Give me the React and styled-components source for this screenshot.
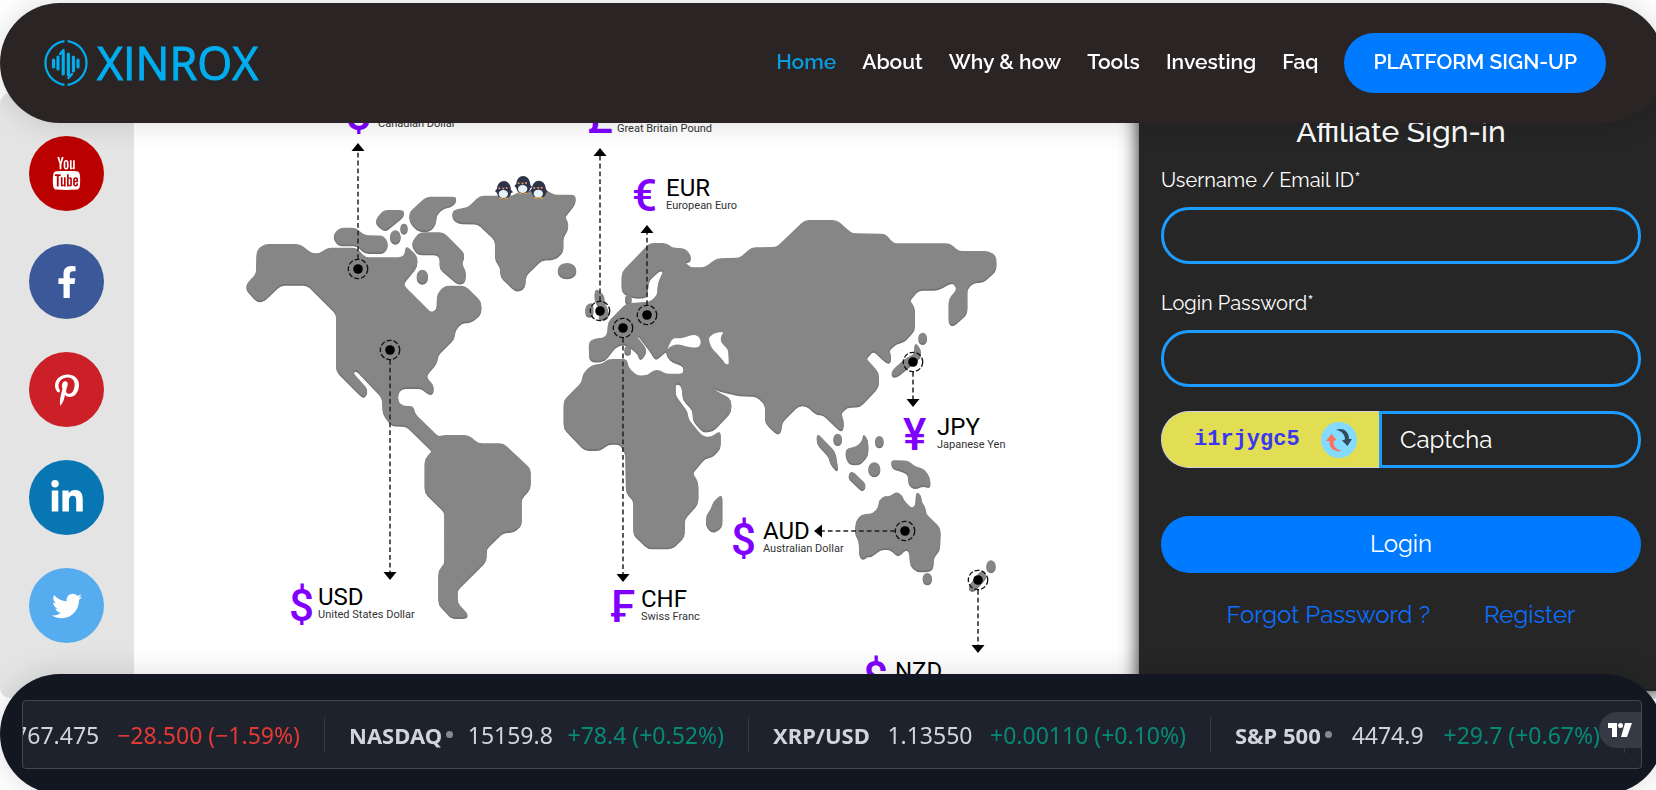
import React from "react";
import styled, { createGlobalStyle } from "styled-components";
import { FaFacebookF, FaPinterestP, FaLinkedinIn, FaTwitter } from "react-icons/fa";
import { TfiYoutube } from "react-icons/tfi";

const GlobalStyle = createGlobalStyle`
  * { box-sizing: border-box; }
  body {
    margin: 0;
    background: #fff;
    overflow: hidden;
    font-family: Raleway, "Open Sans", "Noto Sans", sans-serif;
  }
`;

const Page = styled.div`
  overflow: hidden;
`;

/* ---------- header ---------- */

const Header = styled.header`
  position: fixed;
  z-index: 10;
  top: 3px;
  left: 0;
  right: -8px;
  height: 120px;
  padding: 0 58px 0 43px;
  border-radius: 60px;
  background: #2a2424;
  box-shadow: 0 0 30px rgba(0, 0, 0, 0.14);
  display: flex;
  align-items: center;
  justify-content: space-between;
`;

const Brand = styled.a`
  display: flex;
  align-items: center;
  gap: 6px;
  color: #00adef;
  font: 400 45px/60px "Open Sans", "Noto Sans", sans-serif;
  -webkit-text-stroke: 1px #00adef;
  text-decoration: none;
`;

const Nav = styled.nav`
  display: flex;
  align-items: center;
  gap: 26px;
`;

const NavLink = styled.a`
  padding: 15px 0 17px;
  color: ${(p) => (p.$active ? "#0a9bdc" : "#fff")};
  font-size: 21px;
  font-weight: 600;
  line-height: 28px;
  text-decoration: none;
  white-space: nowrap;
`;

const SignUp = styled(NavLink)`
  padding: 15px 29px 17px;
  border-radius: 30px;
  background: #007bff;
`;

/* ---------- main ---------- */

const Main = styled.main`
  display: flex;
  align-items: flex-start;
  margin-right: -8px;
  padding-top: 93px;
`;

const Social = styled.aside`
  flex: 0 0 134px;
  display: flex;
  flex-direction: column;
  align-items: center;
  gap: 33px;
  padding: 43px 1px 55px 0;
  border-radius: 10px 0 0 10px;
  background: #e4e4e4;
`;

const SocialLink = styled.a`
  display: flex;
  align-items: center;
  justify-content: center;
  width: 75px;
  height: 75px;
  border-radius: 50%;
  background: ${(p) => p.$color};
  color: #fff;
`;

const MapArea = styled.section`
  flex: 1;
  min-width: 0;
  background: #fff;
  svg {
    display: block;
    width: 100%;
    height: auto;
  }
`;

const Panel = styled.section`
  position: relative;
  flex: 0 0 525px;
  padding: 17px 23px 58px 22px;
  background: #262626;
  box-shadow: 0 0 18px rgba(0, 0, 0, 0.9);
  color: #fff;
`;

const Title = styled.h1`
  margin: 0;
  font-size: 30px;
  font-weight: 500;
  line-height: 44px;
  text-align: center;
`;

const Form = styled.form`
  display: flex;
  flex-direction: column;
  padding-top: 11px;
`;

const Field = styled.label`
  display: flex;
  flex-direction: column;
  gap: 12px;
  margin-bottom: 24px;
  font-size: 20px;
  line-height: 30px;
`;

const TextInput = styled.input`
  width: 100%;
  height: 57px;
  padding: 0 24px;
  border: 3px solid #1c9cff;
  border-radius: 28px;
  outline: 0;
  background: transparent;
  color: #fff;
  font: inherit;
`;

const CaptchaRow = styled.div`
  display: flex;
  height: 57px;
`;

const CaptchaImage = styled.div`
  flex: 0 0 218px;
  display: flex;
  align-items: center;
  justify-content: space-between;
  padding: 0 22px 0 32px;
  border: 1px solid #ced4da;
  border-right: 0;
  border-radius: 28px 0 0 28px;
  background: #e1de53;
  color: #3a36f2;
  font: 700 22px/30px "Liberation Mono", monospace;
`;

const Refresh = styled.button`
  width: 36px;
  height: 36px;
  padding: 0;
  border: 0;
  border-radius: 50%;
  background: #84dbff;
  svg { display: block; }
`;

const CaptchaInput = styled(TextInput)`
  flex: 1;
  padding: 0 18px;
  border-radius: 0 28px 28px 0;
  font-size: 24px;
  &::placeholder {
    color: #fff;
    opacity: 1;
  }
`;

const LoginButton = styled.button`
  height: 57px;
  margin-top: 48px;
  padding: 0 0 3px;
  border: 0;
  border-radius: 28px;
  background: #007bff;
  color: #fff;
  font: inherit;
  font-size: 24px;
`;

const Links = styled.div`
  display: flex;
  justify-content: center;
  gap: 54px;
  padding-top: 24px;
  a {
    color: #0d6efd;
    font-size: 24px;
    line-height: 36px;
    text-decoration: none;
  }
`;

/* ---------- ticker ---------- */

const TickerBar = styled.footer`
  position: fixed;
  z-index: 10;
  left: 0;
  right: -8px;
  bottom: -4px;
  height: 120px;
  padding: 26px 22px 25px;
  border-radius: 60px;
  background: #131722;
  box-shadow: 0 0 30px rgba(0, 0, 0, 0.14);
`;

const Ticker = styled.div`
  position: relative;
  display: flex;
  align-items: center;
  height: 69px;
  overflow: hidden;
  border: 1px solid #434651;
  border-radius: 4px;
  background: #1e222d;
  font: 400 23px/36px "Noto Sans", "Open Sans", sans-serif;
  color: #d1d4dc;
`;

const Quote = styled.div`
  flex: 0 0 ${(p) => p.$width}px;
  min-width: 0;
  display: flex;
  align-items: center;
  justify-content: ${(p) => (p.$clipped ? "flex-end" : "space-between")};
  gap: ${(p) => (p.$clipped ? 18 : 12)}px;
  height: 36px;
  padding: 0 24px 0 ${(p) => (p.$clipped ? 0 : 24)}px;
  border-right: 1px solid #363a45;
  overflow: hidden;
  white-space: nowrap;
`;

const Symbol = styled.a`
  display: flex;
  align-items: center;
  gap: 4px;
  color: inherit;
  font-size: 22px;
  font-weight: 700;
  text-decoration: none;
`;

const Dot = styled.span`
  width: 7px;
  height: 7px;
  border-radius: 50%;
  background: #868993;
`;

const Change = styled.span`
  color: ${(p) => (p.$down ? "#e53935" : "#068a76")};
`;

const Badge = styled.a`
  position: absolute;
  right: 0;
  top: 11px;
  display: flex;
  align-items: center;
  justify-content: center;
  width: 42px;
  height: 36px;
  border-radius: 18px 0 0 18px;
  background: #363a45;
`;

/* ---------- drawings ---------- */

function LogoMark() {
  return (
    <svg width="48" height="46" viewBox="0 0 48 46" fill="none" stroke="#00adef" aria-hidden="true">
      <path d="M21.5 1.2A22 22 0 0 0 21.5 44.8M24.5 1.2A22 22 0 0 1 24.5 44.8" strokeWidth="2.2" />
      <g strokeWidth="3.2" strokeLinecap="round">
        <path d="M10.5 20v7M15 17v12M20.2 12v22M25.4 14v21M30.4 17v14M35 20v7" />
        <path d="M17 14l3.5-4M29 34l-3.5 4" strokeWidth="2.4" />
      </g>
    </svg>
  );
}

function RefreshMark() {
  return (
    <svg width="36" height="36" viewBox="0 0 36 36" aria-hidden="true">
      <path fill="#324a5e" d="M15 8C20 5.500 28 8 28 17h3L26.500 24 21 18.500 24 17.500C24 12 20 8.500 15 8Z" />
      <path fill="#ff7058" d="M21 28.500C16 31 8 27.500 8.500 19H5l5.500-7 5 6-3 1C12.500 25 16 28.500 21 28.500Z" />
    </svg>
  );
}

const LAND = {
  west: [
    "M82 395L103 377H210L245 405H270L292 388H378L405 417H515L527 405L528 382L560 412V440L520 488L522 502L603 583L622 572L623 525L645 502H705L752 548V580L725 605L695 606L674 630L672 655L622 705L620 728L588 765L592 782L610 800L608 820L597 822L575 803H515L502 820L503 850L520 863H550L553 885L625 955L640 950H715L745 975H820L900 1050V1105L873 1135V1215L850 1235H820L768 1285V1322L680 1410L682 1455L712 1485L708 1493H665L627 1452V1355L645 1335V1175L586 1118V1020L610 995L530 917L485 915L460 880L458 832L378 748L366 760L412 812L405 830L395 828L320 752V580L232 493H152L100 543H82L50 508L52 495L80 465Z",
    "M330 328H378L400 350L460 352L474 375L462 398H405L382 375H325L310 350Z",
    "M462 275H520V288L465 333L440 312V300Z",
    "M590 235H678L675 248L660 260L640 262L617 285V310L600 332H565L540 305V280Z",
    "M570 342H640L703 405L693 435L706 455L704 485L685 492L630 445L632 415L622 402H565L548 380L550 365Z",
    "M750 232H850L870 218H955L970 229H1035V250L1002 292L1013 310L1012 330L998 350V395L975 416L935 418L886 465L884 500L870 511L855 510L813 470L812 440L797 420V360L745 310L685 308L668 295L670 275L715 266Z",
    "M1097 510L1122 530L1120 548L1136 580L1130 598H1105L1115 575L1095 540Z",
    "M1068 560L1088 552V590L1068 588Z",
  ],
  east: [
    "M247 460L330 374H380L395 388L435 390L452 412L448 425L430 426L450 447H495L530 420L600 418L635 387L710 386L795 305H890L935 345L1035 346L1060 375H1230L1255 398H1345L1367 412V450L1330 485H1300L1280 505V580L1240 617L1228 610V540L1250 515V500L1240 487L1225 490L1195 508H1135L1106 543L1123 565V630L1090 665L1070 668L1045 690L1052 712L1050 727H1040L1000 690L975 717L1015 762V800L960 858L920 860L900 880L910 905L908 930H900L850 882H830L800 855H775L725 905L722 935L712 942L677 908V852L650 827L600 825L575 820L540 812L510 795L530 820L560 833L572 845V875L520 930L490 935L460 900V870L430 838L428 805L420 790H405V830L442 880L443 900L475 940L490 955H515L540 937V985L515 1010L495 1012L455 1060L473 1090V1150L433 1195L432 1250L397 1284H325L282 1243V1140L260 1118L258 1000L240 970H205L180 989H135L73 925V845L127 790L130 765L155 740L190 735L205 722H260L263 745L290 772L325 770L340 755H360L375 766H430L434 745L425 732L400 726L382 710L380 690L352 715H345L330 690L295 645L288 652L318 690L313 705L300 720L295 700L270 680L250 670L225 680L195 720L170 725L150 720L148 670L165 660L195 658L205 640V610L260 555L330 550L353 530L356 490L373 455L360 448L325 480L320 530L290 533L265 526L247 515Z",
    "M545 1128V1220L520 1237L500 1220V1190L515 1170L520 1150Z",
    "M832 945L885 1000L893 1055L872 1030L868 1010L832 970Z",
    "M970 945L983 965V1005L960 1032H930L918 1010L920 990L950 985L970 965Z",
    "M935 1057L977 1097L968 1113L925 1072Z",
    "M1053 1025L1105 1027L1125 1045L1150 1050L1168 1075L1170 1103L1150 1095L1125 1105L1108 1095L1105 1060L1080 1050L1060 1045Z",
    "M950 1205L965 1188L1000 1185L1017 1165L1018 1145L1035 1132L1048 1135L1070 1120L1085 1130L1090 1145L1115 1170L1128 1160L1130 1120L1142 1130L1143 1150L1155 1165L1156 1185L1200 1228L1198 1290L1180 1310L1178 1345L1165 1353H1130L1112 1335L1110 1295L1098 1285L1075 1308L1050 1285L1020 1287L995 1308H980L970 1317L960 1310L958 1260L946 1240Z",
    "M1125 672L1140 690L1142 710L1070 770L1056 768L1058 755L1095 722L1125 705Z",
    "M1325 1355L1340 1370L1300 1415L1285 1405Z",
  ],
};

const ISLETS = [
  [496, 353, 14, 17], [522, 328, 9, 12], [577, 472, 15, 18], [1011, 454, 26, 20],
  [1195, 540, 8, 10], [1193, 693, 8, 10], [1823, 960, 11, 14], [1948, 967, 11, 14],
  [1933, 1050, 16, 18], [2078, 657, 11, 14], [2092, 1378, 12, 14], [2283, 1341, 12, 15],
];

/* Turns a closed outline of straight edges into one with rounded corners. */
function roundCorners(d, radius) {
  const pts = [];
  let x = 0;
  let y = 0;
  for (const [, cmd, args] of d.matchAll(/([MLHV])([^MLHVZ]*)/g)) {
    const n = args.trim().split(/\s+/).map(Number);
    if (cmd === "H") x = n[0];
    else if (cmd === "V") y = n[0];
    else [x, y] = n;
    pts.push([x, y]);
  }
  const toward = (a, b) => {
    const len = Math.hypot(b[0] - a[0], b[1] - a[1]) || 1;
    const t = Math.min(radius / len, 0.5);
    return `${a[0] + (b[0] - a[0]) * t} ${a[1] + (b[1] - a[1]) * t}`;
  };
  return (
    pts
      .map((p, i) => {
        const prev = pts[(i + pts.length - 1) % pts.length];
        const next = pts[(i + 1) % pts.length];
        return `${i ? "L" : "M"}${toward(p, prev)}Q${p[0]} ${p[1]} ${toward(p, next)}`;
      })
      .join("") + "Z"
  );
}

const WEST = LAND.west.map((d) => roundCorners(d, 12));
const EAST = LAND.east.map((d) => roundCorners(d, 12));

function Land({ color }) {
  return (
    <g fill={color} stroke={color} strokeWidth="4" strokeLinejoin="round">
      {WEST.map((d) => <path key={d} d={d} />)}
      <g transform="translate(930 0)">
        {EAST.map((d) => <path key={d} d={d} />)}
      </g>
      {ISLETS.map(([cx, cy, rx, ry]) => (
        <ellipse key={cx} cx={cx} cy={cy} rx={rx} ry={ry} />
      ))}
    </g>
  );
}

function Penguin({ x, y }) {
  return (
    <g transform={`translate(${x} ${y})`}>
      <path fill="#2f3349" d="M0-26C12-26 20-14 21 0L27 8L21 10C20 20 12 26 0 26S-20 20-21 10L-27 4L-21-3C-20-16-12-26 0-26Z" />
      <ellipse cx="-2" cy="13" rx="14" ry="12" fill="#e6f3fb" />
      <circle cx="-14" cy="-4" r="3" fill="#e58f86" />
      <circle cx="8" cy="-5" r="3" fill="#e58f86" />
      <path fill="#f0a030" d="M-7-6h9l-4 6zM-14 24h9v4h-9zM2 24h9v4h-9z" />
    </g>
  );
}

const PINS = [
  { x: 358, y: 269, tip: 143, dir: "up" },
  { x: 600, y: 311, tip: 148, dir: "up" },
  { x: 647, y: 315, tip: 225, dir: "up" },
  { x: 623, y: 328, tip: 582, dir: "down" },
  { x: 390, y: 350, tip: 580, dir: "down" },
  { x: 913, y: 362, tip: 407, dir: "down" },
  { x: 978, y: 580, tip: 653, dir: "down" },
  { x: 905, y: 531, tip: 814, dir: "left" },
];

function Pin({ x, y, tip, dir }) {
  const line = {
    up: `M${x} ${y - 10}V${tip + 8}`,
    down: `M${x} ${y + 10}V${tip - 8}`,
    left: `M${x - 10} ${y}H${tip + 8}`,
  }[dir];
  const head = {
    up: `M${x} ${tip}l6.500 8h-13z`,
    down: `M${x} ${tip}l6.500-8h-13z`,
    left: `M${tip} ${y}l8-6.500v13z`,
  }[dir];
  return (
    <g>
      <circle cx={x} cy={y} r="9.700" fill="none" stroke="#111" strokeWidth="1.300" strokeDasharray="5 2" />
      <circle cx={x} cy={y} r="4.800" />
      <path d={line} stroke="#222" strokeWidth="1.500" strokeDasharray="4.800 3" />
      <path d={head} />
    </g>
  );
}

const CURRENCIES = [
  { sign: "$", x: 346, y: 130, name: "Canadian Dollar", nx: 378, ny: 127 },
  { sign: "£", x: 587, y: 133, name: "Great Britain Pound", nx: 617, ny: 132 },
  { sign: "€", x: 632, y: 211, code: "EUR", name: "European Euro", nx: 666, ny: 209 },
  { sign: "$", x: 289, y: 621, code: "USD", name: "United States Dollar", nx: 318, ny: 618 },
  { sign: "₣", x: 611, y: 622, code: "CHF", name: "Swiss Franc", nx: 641, ny: 620 },
  { sign: "¥", x: 903, y: 450, code: "JPY", name: "Japanese Yen", nx: 937, ny: 448 },
  { sign: "$", x: 731, y: 555, code: "AUD", name: "Australian Dollar", nx: 763, ny: 552 },
  { sign: "$", x: 863, y: 693, code: "NZD", name: "New Zealand Dollar", nx: 895, ny: 692 },
];

function WorldMap() {
  return (
    <svg viewBox="134 93 1005 606" role="img" aria-label="World currencies" fontFamily="Roboto, sans-serif">
      <g transform="translate(230 120) scale(0.333333)">
        <g transform="translate(0 2)">
          <Land color="#727272" />
        </g>
        <g transform="translate(0 -3)">
          <Land color="#868686" />
        </g>
        <g transform="translate(930 0)" fill="#fff">
          <path d="M382 688C390 672 395 655 405 655S425 655 440 650S465 642 475 650S485 680 470 682S440 680 425 675S392 676 382 688Z" />
          <path d="M507 655C515 642 530 635 550 637C542 650 540 660 545 668L562 688Q566 695 566 732Q555 735 550 722L530 700Q507 680 507 655Z" />
        </g>
        <Penguin x={822} y={209} />
        <Penguin x={880} y={194} />
        <Penguin x={927} y={208} />
      </g>
      {PINS.map((p) => <Pin key={p.x} {...p} />)}
      {CURRENCIES.map((c) => (
        <g key={c.name}>
          <text x={c.x} y={c.y} fontSize="44" fontWeight="500" fill="#7f00ff">{c.sign}</text>
          {c.code && <text x={c.nx} y={c.ny - 13} fontSize="24" fill="#000">{c.code}</text>}
          <text x={c.nx} y={c.ny} fontSize="11" fill="#333">{c.name}</text>
        </g>
      ))}
    </svg>
  );
}

const NAV = ["Home", "About", "Why & how", "Tools", "Investing", "Faq"];

const SOCIAL = [
  { name: "YouTube", color: "#bb0000", Icon: TfiYoutube, size: 33 },
  { name: "Facebook", color: "#3b5998", Icon: FaFacebookF, size: 32 },
  { name: "Pinterest", color: "#cb2027", Icon: FaPinterestP, size: 32 },
  { name: "LinkedIn", color: "#0976b4", Icon: FaLinkedinIn, size: 36 },
  { name: "Twitter", color: "#55acee", Icon: FaTwitter, size: 30 },
];

const QUOTES = [
  { price: "1767.475", change: "−28.500 (−1.59%)", down: true, width: 302 },
  { symbol: "NASDAQ", dot: true, price: "15159.8", change: "+78.4 (+0.52%)", width: 424 },
  { symbol: "XRP/USD", price: "1.13550", change: "+0.00110 (+0.10%)", width: 462 },
  { symbol: "S&P 500", dot: true, price: "4474.9", change: "+29.7 (+0.67%)", width: 414 },
];

export default function App() {
  return (
    <Page>
      <GlobalStyle />
      <Header>
        <Brand href="#"><LogoMark />XINROX</Brand>
        <Nav>
          {NAV.map((n) => <NavLink key={n} href="#" $active={n === "Home"}>{n}</NavLink>)}
          <SignUp href="#">PLATFORM SIGN-UP</SignUp>
        </Nav>
      </Header>

      <Main>
        <Social>
          {SOCIAL.map(({ name, color, Icon, size }) => (
            <SocialLink key={name} href="#" aria-label={name} $color={color}>
              <Icon size={size} />
            </SocialLink>
          ))}
        </Social>
        <MapArea><WorldMap /></MapArea>
        <Panel>
          <Title>Affiliate Sign-in</Title>
          <Form onSubmit={(e) => e.preventDefault()}>
            <Field>Username / Email ID*<TextInput type="text" /></Field>
            <Field>Login Password*<TextInput type="password" /></Field>
            <CaptchaRow>
              <CaptchaImage>
                i1rjygc5
                <Refresh type="button" aria-label="Refresh captcha"><RefreshMark /></Refresh>
              </CaptchaImage>
              <CaptchaInput type="text" placeholder="Captcha" aria-label="Captcha" />
            </CaptchaRow>
            <LoginButton type="submit">Login</LoginButton>
          </Form>
          <Links>
            <a href="#">Forgot Password ?</a>
            <a href="#">Register</a>
          </Links>
        </Panel>
      </Main>

      <TickerBar>
        <Ticker>
          {QUOTES.map((q) => (
            <Quote key={q.price} $width={q.width} $clipped={!q.symbol}>
              {q.symbol && <Symbol href="#">{q.symbol}{q.dot && <Dot />}</Symbol>}
              <span>{q.price}</span>
              <Change $down={q.down}>{q.change}</Change>
            </Quote>
          ))}
          <Badge href="#" aria-label="TradingView">
            <svg width="24" height="14" viewBox="0 0 24 14" fill="#fff" aria-hidden="true">
              <path d="M0 0h9v14H4V5H0zM17 0h7l-5 14h-6z" />
              <circle cx="12.500" cy="2.500" r="2.500" />
            </svg>
          </Badge>
        </Ticker>
      </TickerBar>
    </Page>
  );
}
